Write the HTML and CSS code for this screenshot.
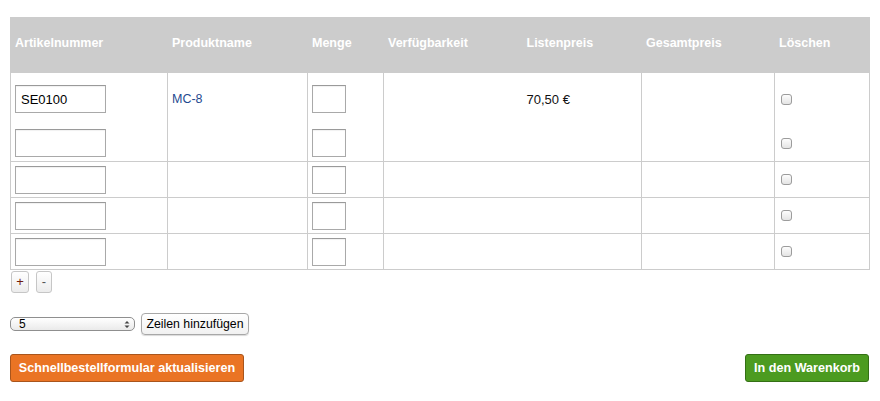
FILE: index.html
```html
<!DOCTYPE html>
<html lang="de">
<head>
<meta charset="utf-8">
<title>Schnellbestellung</title>
<link rel="stylesheet" href="styles.css">
</head>
<body>
<div class="page">
  <table class="order">
    <colgroup>
      <col class="c-sku"><col class="c-name"><col class="c-qty"><col class="c-avail"><col class="c-price"><col class="c-total"><col class="c-del">
    </colgroup>
    <thead>
      <tr>
        <th>Artikelnummer</th>
        <th>Produktname</th>
        <th>Menge</th>
        <th class="avail">Verfügbarkeit</th>
        <th class="price">Listenpreis</th>
        <th>Gesamtpreis</th>
        <th>Löschen</th>
      </tr>
    </thead>
    <tbody>
      <tr class="row-first">
        <td><input class="sku" type="text" value="SE0100"></td>
        <td><a class="prod" href="#">MC-8</a></td>
        <td><input class="qty" type="text"></td>
        <td class="avail"></td>
        <td class="price"><span class="amount">70,50 €</span></td>
        <td></td>
        <td><input class="del" type="checkbox"></td>
      </tr>
      <tr class="row-second">
        <td><input class="sku" type="text"></td>
        <td></td>
        <td><input class="qty" type="text"></td>
        <td class="avail"></td>
        <td class="price"></td>
        <td></td>
        <td><input class="del" type="checkbox"></td>
      </tr>
      <tr class="row">
        <td><input class="sku" type="text"></td>
        <td></td>
        <td><input class="qty" type="text"></td>
        <td class="avail"></td>
        <td class="price"></td>
        <td></td>
        <td><input class="del" type="checkbox"></td>
      </tr>
      <tr class="row">
        <td><input class="sku" type="text"></td>
        <td></td>
        <td><input class="qty" type="text"></td>
        <td class="avail"></td>
        <td class="price"></td>
        <td></td>
        <td><input class="del" type="checkbox"></td>
      </tr>
      <tr class="row">
        <td><input class="sku" type="text"></td>
        <td></td>
        <td><input class="qty" type="text"></td>
        <td class="avail"></td>
        <td class="price"></td>
        <td></td>
        <td><input class="del" type="checkbox"></td>
      </tr>
    </tbody>
  </table>

  <div class="rowctl">
    <button class="mini plus" type="button">+</button>
    <button class="mini minus" type="button">-</button>
  </div>

  <div class="addrows">
    <span class="selwrap">
      <select class="count">
        <option>5</option>
        <option>10</option>
        <option>15</option>
      </select>
      <svg class="selarrow" width="6" height="9" viewBox="0 0 6 9"><path d="M0.5 3.5 L3 1 L5.5 3.5 Z M0.5 5.5 L3 8 L5.5 5.5 Z" fill="#444"/></svg>
    </span>
    <button class="sysbtn" type="button">Zeilen hinzufügen</button>
  </div>

  <div class="actions">
    <button class="btn btn-orange" type="button">Schnellbestellformular aktualisieren</button>
    <button class="btn btn-green" type="button">In den Warenkorb</button>
  </div>
</div>
</body>
</html>
```

FILE: styles.css
```css
html, body {
  margin: 0;
  padding: 0;
  background: #fff;
}

body {
  font-family: "Liberation Sans", Arial, Helvetica, sans-serif;
  font-size: 12px;
  color: #000;
}

.page {
  padding: 17px 10px 0 10px;
  width: 860px;
}

.order {
  width: 860px;
  border-collapse: collapse;
  table-layout: fixed;
  border: 1px solid #cccccc;
}

.c-sku { width: 157px; }
.c-name { width: 140px; }
.c-qty { width: 76px; }
.c-avail { width: 139px; }
.c-price { width: 119px; }
.c-total { width: 133px; }
.c-del { width: 95px; }

.order th {
  background: #cccccc;
  color: #ffffff;
  font-weight: bold;
  font-size: 12.5px;
  text-align: left;
  height: 55px;
  padding: 0 4px 4px 4px;
  border: 1px solid #cccccc;
  vertical-align: middle;
  box-sizing: border-box;
}

.order td {
  border: 1px solid #cccccc;
  padding: 0 4px;
  vertical-align: middle;
  box-sizing: border-box;
}

.order .avail { border-right-style: hidden; }
.order .price { border-left-style: hidden; }

.row-first td {
  height: 53px;
  border-bottom-style: hidden;
}
.row-second td {
  height: 36px;
  border-top-style: hidden;
}
.row td {
  height: 36px;
}

.sku, .qty {
  display: block;
  box-sizing: border-box;
  height: 28px;
  margin: 0;
  padding: 0 5px;
  border: 1px solid #a9a9a9;
  border-top-color: #9a9a9a;
  box-shadow: inset 0 1px 1px rgba(0,0,0,0.06);
  font-family: "Liberation Sans", Arial, Helvetica, sans-serif;
  font-size: 13px;
  color: #000;
  background: #fff;
  border-radius: 0;
  outline: none;
}
.sku { width: 91px; }
.qty { width: 34px; }

.prod {
  color: #1f4a8f;
  text-decoration: none;
  font-size: 12.5px;
}

.amount {
  font-size: 13px;
  color: #111;
}

.del {
  -webkit-appearance: none;
  appearance: none;
  display: block;
  width: 11px;
  height: 11px;
  margin: 0 0 0 2px;
  border: 1px solid #9c9c9c;
  border-radius: 3px;
  background: linear-gradient(#fdfdfd, #e4e4e4);
  box-sizing: border-box;
}

.rowctl {
  display: flex;
  gap: 7px;
  padding: 1px 0 0 1px;
}

.mini {
  box-sizing: border-box;
  height: 22px;
  padding: 0;
  margin: 0;
  border: 1px solid #c6c6c6;
  border-radius: 3px;
  background: linear-gradient(#ffffff, #ececec);
  font-family: "Liberation Sans", Arial, sans-serif;
  font-size: 13px;
  line-height: 18px;
}
.plus { width: 18px; color: #6e1a0c; font-weight: normal; }
.minus { width: 16px; color: #555; }

.addrows {
  display: flex;
  align-items: center;
  gap: 6px;
  margin-top: 20px;
}

.selwrap {
  position: relative;
  display: inline-block;
  width: 125px;
  height: 14px;
}

.count {
  -webkit-appearance: none;
  appearance: none;
  box-sizing: border-box;
  width: 125px;
  height: 14px;
  margin: 0;
  padding: 0 0 0 8px;
  border: 1px solid #8f8f8f;
  border-radius: 5px;
  background: linear-gradient(#ffffff, #eaeaea);
  font-family: "Liberation Sans", Arial, sans-serif;
  font-size: 12px;
  line-height: 12px;
  color: #000;
}

.selarrow {
  position: absolute;
  right: 5px;
  top: 3px;
}

.sysbtn {
  box-sizing: border-box;
  width: 108px;
  height: 22px;
  margin: 0;
  padding: 0;
  border: 1px solid #a8a8a8;
  border-radius: 4px;
  background: linear-gradient(#ffffff, #f1f1f1);
  box-shadow: 0 1px 1px rgba(0,0,0,0.15);
  font-family: "Liberation Sans", Arial, sans-serif;
  font-size: 12.3px;
  color: #000;
  white-space: nowrap;
}

.actions {
  display: flex;
  justify-content: space-between;
  margin-top: 19px;
  width: 859px;
}

.btn {
  box-sizing: border-box;
  height: 28px;
  margin: 0;
  padding: 0;
  border-radius: 3px;
  color: #fff;
  font-family: "Liberation Sans", Arial, sans-serif;
  font-weight: bold;
  font-size: 12.6px;
  white-space: nowrap;
  text-align: center;
}

.btn-orange {
  width: 234px;
  background: #ea7424;
  border: 1px solid #a9551c;
}

.btn-green {
  width: 124px;
  background: #4c9b20;
  border: 1px solid #347015;
}
```
